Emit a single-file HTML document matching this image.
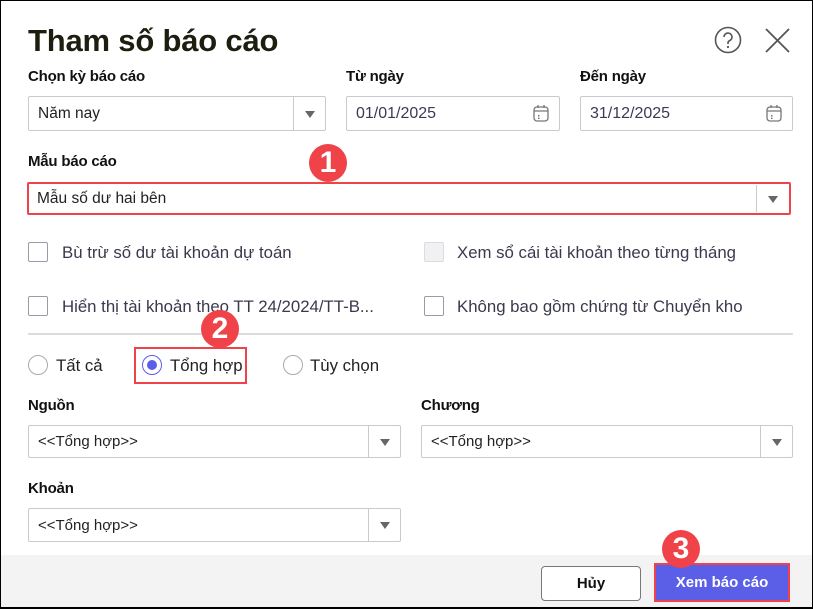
<!DOCTYPE html>
<html><head><meta charset="utf-8"><style>
*{box-sizing:border-box;margin:0;padding:0}
body{width:813px;height:609px;overflow:hidden;background:#fff;font-family:"Liberation Sans",sans-serif;position:relative;color:#2b2b3a}
.frame{position:absolute;left:0;top:0;width:813px;height:609px;border:1px solid #000;border-bottom-width:2px;z-index:10;pointer-events:none}
.a{position:absolute}
.title{left:28px;top:23px;font-size:31px;font-weight:bold;color:#1e1e10;letter-spacing:-0.2px}
.lbl{font-size:15px;font-weight:bold;color:#111;letter-spacing:-0.2px}
.inp{border:1px solid #c9c9d0;border-radius:2px;background:#fff;font-size:15px;color:#222;padding-left:9px;display:flex;align-items:center}
.dd{position:absolute;right:0;top:0;bottom:0;width:32px;border-left:1px solid #c9c9d0}
.dd:after{content:"";position:absolute;left:11px;top:50%;margin-top:-3px;border-left:5px solid transparent;border-right:5px solid transparent;border-top:7px solid #666}
.cb{width:20px;height:20px;border:1px solid #9a9aa8;border-radius:2px;background:#fff}
.txt{font-size:16.8px;color:#3a3a4e}
.rd{width:20px;height:20px;border:1px solid #aaa;border-radius:50%;background:#fff}
.badge{width:38px;height:38px;border-radius:50%;background:#f04249;color:#fff;font-size:30px;font-weight:bold;text-align:center;line-height:38px}
.red{border:2px solid #f04249}
</style></head><body>
<div class="frame"></div>
<div class="a title">Tham số báo cáo</div>
<svg class="a" style="left:714px;top:26px" width="28" height="28" viewBox="0 0 28 28"><circle cx="14" cy="14" r="12.5" fill="none" stroke="#555" stroke-width="1.6"/><path d="M10 11a4 4 0 1 1 5.5 3.7c-1 .5-1.5 1.2-1.5 2.3v1" fill="none" stroke="#555" stroke-width="1.6"/><circle cx="14" cy="21" r="1.1" fill="#555"/></svg>
<svg class="a" style="left:765px;top:28px" width="25" height="25"><path d="M1 1L24 24M24 1L1 24" stroke="#555" stroke-width="1.8"/></svg>

<div class="a lbl" style="left:28px;top:68px">Chọn kỳ báo cáo</div>
<div class="a lbl" style="left:346px;top:68px">Từ ngày</div>
<div class="a lbl" style="left:580px;top:68px">Đến ngày</div>
<div class="a inp" style="left:28px;top:96px;width:298px;height:35px;font-size:15.5px">Năm nay<div class="dd"></div></div>
<div class="a inp" style="left:346px;top:96px;width:214px;height:35px;color:#3a3a55;font-size:16px">01/01/2025</div>
<div class="a inp" style="left:580px;top:96px;width:213px;height:35px;color:#3a3a55;font-size:16px">31/12/2025</div>
<svg class="a" style="left:533px;top:104px" width="16" height="18"><rect x="1" y="3" width="14" height="14" rx="3" fill="none" stroke="#777" stroke-width="1.3"/><path d="M1 7H15M5 1V4M11 1V4" stroke="#777" stroke-width="1.3"/><rect x="5" y="11" width="1.5" height="1.5" fill="#777"/><rect x="5" y="13.5" width="1.5" height="1.5" fill="#777"/></svg>
<svg class="a" style="left:766px;top:104px" width="16" height="18"><rect x="1" y="3" width="14" height="14" rx="3" fill="none" stroke="#777" stroke-width="1.3"/><path d="M1 7H15M5 1V4M11 1V4" stroke="#777" stroke-width="1.3"/><rect x="5" y="11" width="1.5" height="1.5" fill="#777"/><rect x="5" y="13.5" width="1.5" height="1.5" fill="#777"/></svg>

<div class="a lbl" style="left:28px;top:153px">Mẫu báo cáo</div>
<div class="a inp red" style="left:27px;top:182px;width:764px;height:33px;padding-left:8px;font-size:15.5px">Mẫu số dư hai bên<div class="dd" style="top:1px;bottom:1px;right:1px"></div></div>
<div class="a badge" style="left:309px;top:144px">1</div>

<div class="a cb" style="left:28px;top:242px"></div><div class="a txt" style="left:62px;top:243px">Bù trừ số dư tài khoản dự toán</div>
<div class="a cb" style="left:424px;top:242px;background:#f1f1f4;border-color:#dcdce2"></div><div class="a txt" style="left:457px;top:243px">Xem sổ cái tài khoản theo từng tháng</div>
<div class="a cb" style="left:28px;top:296px"></div><div class="a txt" style="left:62px;top:297px">Hiển thị tài khoản theo TT 24/2024/TT-B...</div>
<div class="a cb" style="left:424px;top:296px"></div><div class="a txt" style="left:457px;top:297px">Không bao gồm chứng từ Chuyển kho</div>
<div class="a" style="left:28px;top:333px;width:765px;height:2px;background:#dcdcdc"></div>

<div class="a rd" style="left:28px;top:355px"></div><div class="a txt" style="left:56px;top:356px;color:#222">Tất cả</div>
<div class="a red" style="left:134px;top:347px;width:113px;height:37px"></div>
<div class="a rd" style="left:142px;top:355px;border-color:#5b5fe8"><div style="position:absolute;left:4px;top:4px;width:10px;height:10px;border-radius:50%;background:#5b5fe8"></div></div>
<div class="a txt" style="left:170px;top:356px;color:#222">Tổng hợp</div>
<div class="a badge" style="left:201px;top:310px">2</div>
<div class="a rd" style="left:283px;top:355px"></div><div class="a txt" style="left:310px;top:356px;color:#222">Tùy chọn</div>

<div class="a lbl" style="left:28px;top:397px">Nguồn</div>
<div class="a lbl" style="left:421px;top:397px">Chương</div>
<div class="a inp" style="left:28px;top:425px;width:373px;height:33px">&lt;&lt;Tổng hợp&gt;&gt;<div class="dd"></div></div>
<div class="a inp" style="left:421px;top:425px;width:372px;height:33px">&lt;&lt;Tổng hợp&gt;&gt;<div class="dd"></div></div>
<div class="a lbl" style="left:28px;top:480px">Khoản</div>
<div class="a inp" style="left:28px;top:508px;width:373px;height:34px">&lt;&lt;Tổng hợp&gt;&gt;<div class="dd"></div></div>

<div class="a" style="left:0;top:555px;width:813px;height:54px;background:#f3f3f3"></div>
<div class="a" style="left:541px;top:566px;width:100px;height:35px;border:1px solid #777;border-radius:4px;background:#fff;font-size:15px;font-weight:bold;color:#111;text-align:center;line-height:33px">Hủy</div>
<div class="a red" style="left:654px;top:563px;width:136px;height:39px;background:#5b5fe8;color:#fff;font-size:15px;font-weight:bold;text-align:center;line-height:35px">Xem báo cáo</div>
<div class="a badge" style="left:662px;top:530px">3</div>
</body></html>
